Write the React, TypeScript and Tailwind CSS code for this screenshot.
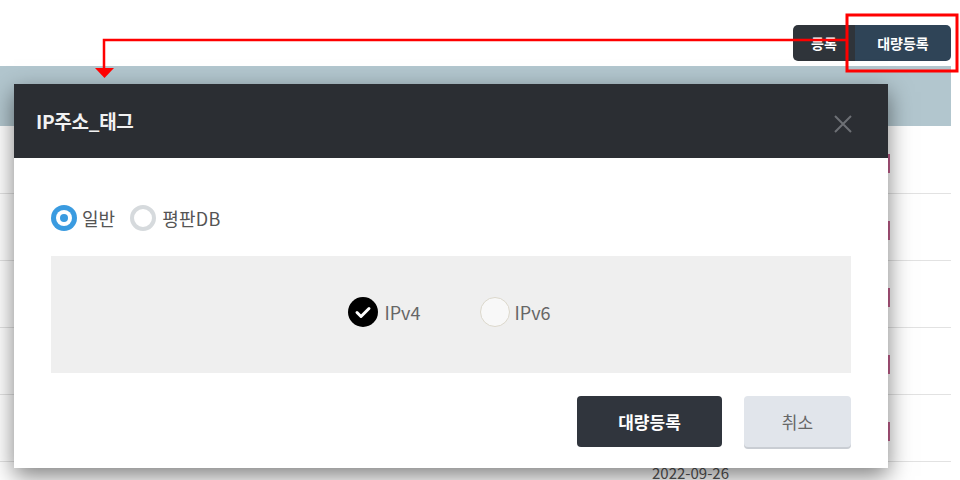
import React from "react";

const font = { fontFamily: '"Noto Sans CJK KR", "Noto Sans", sans-serif' };

const rows = [0, 1, 2, 3, 4, 5];

function Annotation() {
  return (
    <svg className="pointer-events-none absolute left-0 top-0" width="960" height="480">
      <rect x="847" y="15" width="110" height="56" fill="none" stroke="#ff0000" strokeWidth="3" />
      <polyline points="847,40 104,40 104,70" fill="none" stroke="#ff0000" strokeWidth="2.5" />
      <polygon points="95,68 114,68 104.5,78" fill="#ff0000" />
    </svg>
  );
}

function BlueRadio() {
  return (
    <span className="flex h-[26px] w-[26px] shrink-0 items-center justify-center rounded-full bg-[#3a9be0]">
      <span className="flex h-[16px] w-[16px] items-center justify-center rounded-full bg-white">
        <span className="h-[8px] w-[8px] rounded-full bg-[#3a9be0]" />
      </span>
    </span>
  );
}

function GrayRadio() {
  return <span className="block h-[26px] w-[26px] shrink-0 rounded-full border-[4px] border-[#d6dadd] bg-white" />;
}

function CheckCircle() {
  return (
    <svg width="30" height="30" viewBox="0 0 30 30" className="shrink-0">
      <circle cx="15" cy="15" r="15" fill="#000" />
      <path d="M9 15.5l4 4 8-8" fill="none" stroke="#fff" strokeWidth="3" strokeLinecap="round" strokeLinejoin="round" />
    </svg>
  );
}

export default function App() {
  return (
    <div className="relative h-[480px] w-[960px] overflow-hidden bg-white" style={font}>
      {/* page behind the modal */}
      <div className="flex justify-end pr-[9px] pt-[25px]">
        <div className="flex h-[36px] overflow-hidden rounded-[5px]">
          <span className="flex w-[62px] items-center justify-center bg-[#2f343a] text-[14px] font-bold text-white">등록</span>
          <span className="flex w-[96px] items-center justify-center bg-[#2f4457] text-[14px] font-bold text-white">대량등록</span>
        </div>
      </div>
      <div className="mt-[5px] w-[951px]">
        <div className="h-[60px] bg-[#b2c6ce]" />
        <div className="h-px" />
        {rows.map((r) => (
          <div key={r} className="relative flex h-[67px] items-start border-b border-[#e2e2e2]">
            <span className="absolute left-[887px] top-[27px] h-[19px] w-[3px] bg-[#c4608e]" />
            {r === 5 && <span className="ml-[652px] mt-[1px] text-[15px] leading-[20px] text-[#555]">2022-09-26</span>}
          </div>
        ))}
      </div>

      {/* modal */}
      <div className="absolute left-[14px] top-[84px] flex h-[384px] w-[874px] flex-col bg-white shadow-[0_8px_22px_rgba(0,0,0,0.5)]">
        <div className="flex h-[74px] items-center justify-between bg-[#2b2e33] pl-[22px] pr-[35px]">
          <span className="text-[19px] font-bold tracking-[-0.3px] text-[#f2f2f2]">IP주소_태그</span>
          <svg width="20" height="20" viewBox="0 0 20 20" className="mt-[6px]">
            <path d="M2 2l16 16M18 2L2 18" stroke="#6d7075" strokeWidth="2" />
          </svg>
        </div>
        <div className="flex flex-1 flex-col px-[37px] pt-[47px]">
          <div className="flex h-[26px] items-center">
            <BlueRadio />
            <span className="ml-[5px] text-[18px] leading-[26px] text-[#555]">일반</span>
            <span className="ml-[15px]"><GrayRadio /></span>
            <span className="ml-[6px] text-[18px] leading-[26px] tracking-[0.3px] text-[#555]">평판DB</span>
          </div>
          <div className="mt-[25px] flex h-[117px] items-center justify-center bg-[#efefef] pb-[6px] pr-[3px]">
            <CheckCircle />
            <span className="ml-[6px] text-[18px] leading-[30px] text-[#666]">IPv4</span>
            <span className="ml-[59px] h-[30px] w-[30px] shrink-0 rounded-full border border-[#dcd8cc] bg-[#f8f8f8]" />
            <span className="ml-[5px] text-[18px] leading-[30px] text-[#666]">IPv6</span>
          </div>
          <div className="mt-[23px] flex justify-end gap-[22px]">
            <span className="flex h-[51px] w-[145px] items-center justify-center rounded-[4px] bg-[#30353d] text-[17px] font-bold text-white">대량등록</span>
            <span className="flex h-[51px] w-[107px] items-center justify-center rounded-[4px] bg-[#e1e5eb] text-[17px] text-[#666] shadow-[0_2px_0_#c9cdd3]">취소</span>
          </div>
        </div>
      </div>

      <Annotation />
    </div>
  );
}
